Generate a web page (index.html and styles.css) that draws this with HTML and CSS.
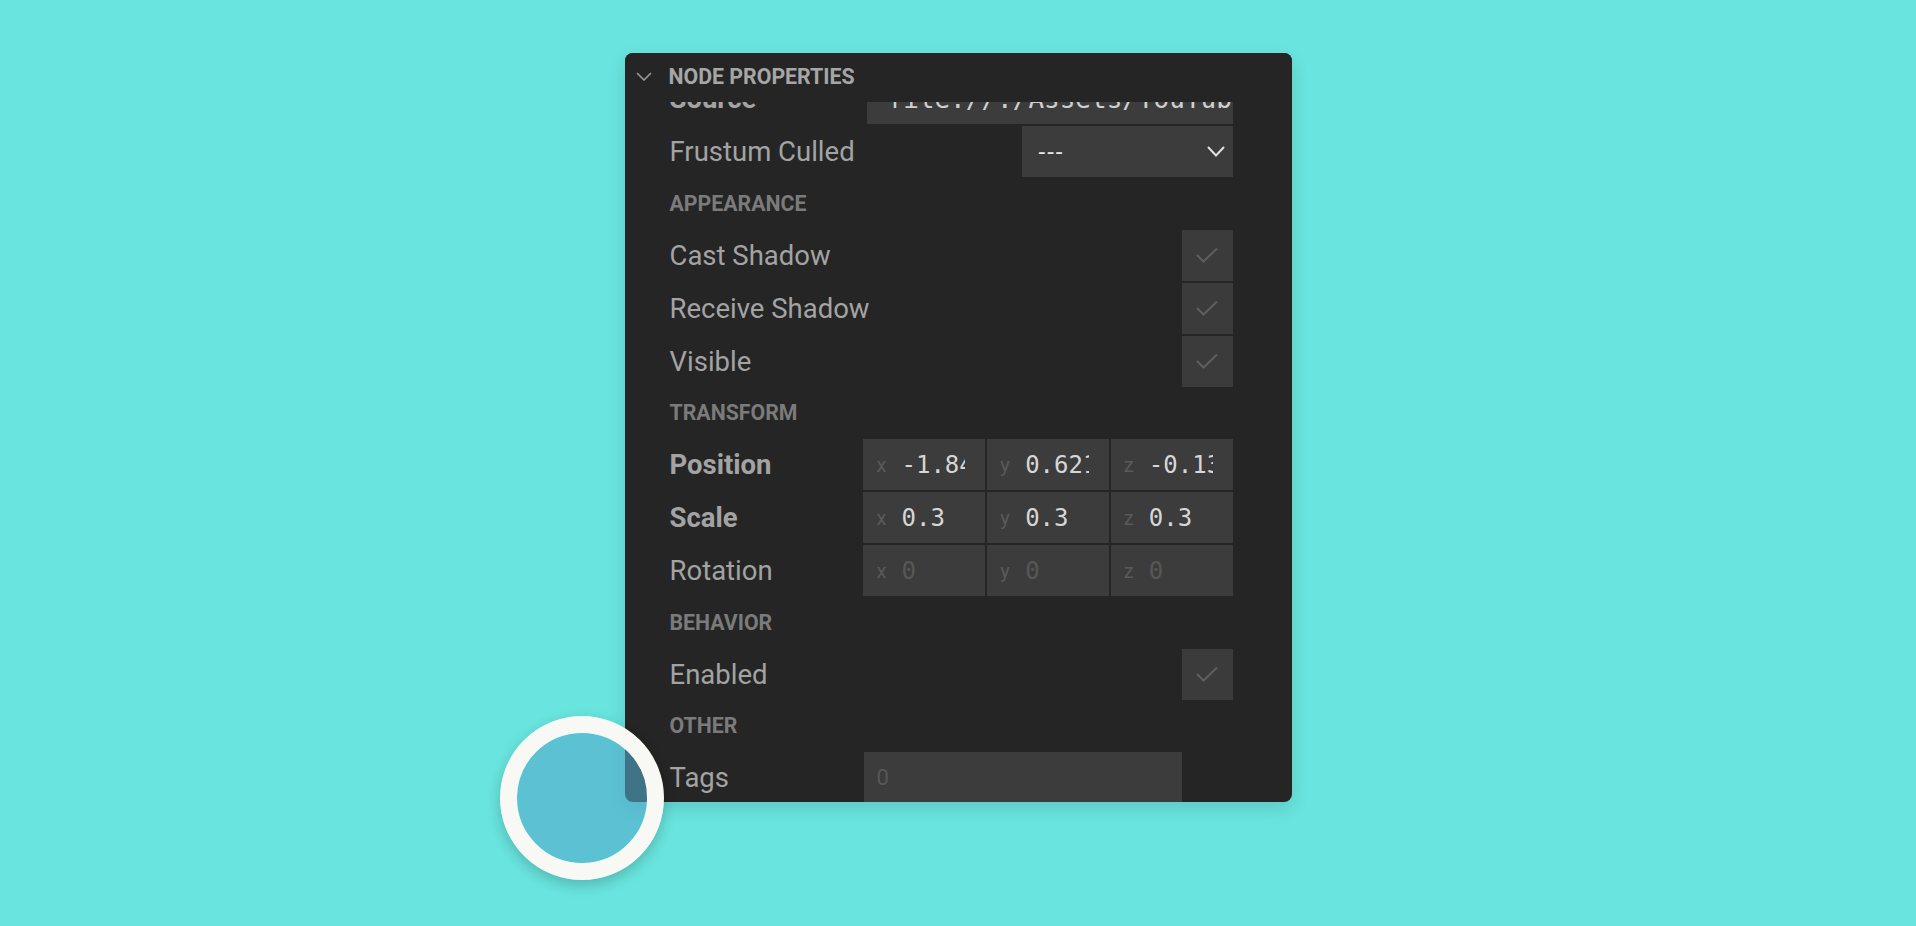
FILE: index.html
```html
<!DOCTYPE html>
<html lang="en">
<head>
    <meta charset="UTF-8">
    <meta name="viewport" content="width=device-width, initial-scale=1.0">
    <title>Node Properties</title>
    <link rel="stylesheet" href="styles.css">
</head>
<body>

    <div class="stage">
        <div class="panel">
            <div class="panel-header">
                <svg class="chevron" viewBox="0 0 16 9" width="16" height="9">
                    <path d="M1 1 L8 8 L15 1" />
                </svg>
                <span>Node Properties</span>
            </div>

            <div class="panel-body">
                <div class="prop-list">
                    <div class="row">
                        <div class="prop-label strong">Source</div>
                        <div class="control">
                            <div class="field source mono">file://./Assets/YouTube/clip_01.mp4</div>
                        </div>
                    </div>
                    <div class="row">
                        <div class="prop-label">Frustum Culled</div>
                        <div class="control">
                            <div class="field select">
                                <span>---</span>
                                <svg viewBox="0 0 18 11" width="18" height="11">
                                    <path d="M1 1 L9 9.5 L17 1" />
                                </svg>
                            </div>
                        </div>
                    </div>

                    <div class="section">Appearance</div>
                    <div class="row">
                        <div class="prop-label">Cast Shadow</div>
                        <div class="control">
                            <div class="checkbox"><svg viewBox="0 0 22 16" width="22" height="16"><path d="M1 8 L7.5 14.5 L21 1.5" /></svg></div>
                        </div>
                    </div>
                    <div class="row">
                        <div class="prop-label">Receive Shadow</div>
                        <div class="control">
                            <div class="checkbox"><svg viewBox="0 0 22 16" width="22" height="16"><path d="M1 8 L7.5 14.5 L21 1.5" /></svg></div>
                        </div>
                    </div>
                    <div class="row">
                        <div class="prop-label">Visible</div>
                        <div class="control">
                            <div class="checkbox"><svg viewBox="0 0 22 16" width="22" height="16"><path d="M1 8 L7.5 14.5 L21 1.5" /></svg></div>
                        </div>
                    </div>

                    <div class="section">Transform</div>
                    <div class="row">
                        <div class="prop-label strong">Position</div>
                        <div class="control vec">
                            <div class="field axis-field"><span class="axis">x</span><span class="val">-1.8432</span></div>
                            <div class="field axis-field"><span class="axis">y</span><span class="val">0.6213</span></div>
                            <div class="field axis-field"><span class="axis">z</span><span class="val">-0.1372</span></div>
                        </div>
                    </div>
                    <div class="row">
                        <div class="prop-label strong">Scale</div>
                        <div class="control vec">
                            <div class="field axis-field"><span class="axis">x</span><span class="val">0.3</span></div>
                            <div class="field axis-field"><span class="axis">y</span><span class="val">0.3</span></div>
                            <div class="field axis-field"><span class="axis">z</span><span class="val">0.3</span></div>
                        </div>
                    </div>
                    <div class="row">
                        <div class="prop-label">Rotation</div>
                        <div class="control vec">
                            <div class="field axis-field"><span class="axis">x</span><span class="val dim">0</span></div>
                            <div class="field axis-field"><span class="axis">y</span><span class="val dim">0</span></div>
                            <div class="field axis-field"><span class="axis">z</span><span class="val dim">0</span></div>
                        </div>
                    </div>

                    <div class="section">Behavior</div>
                    <div class="row">
                        <div class="prop-label">Enabled</div>
                        <div class="control">
                            <div class="checkbox"><svg viewBox="0 0 22 16" width="22" height="16"><path d="M1 8 L7.5 14.5 L21 1.5" /></svg></div>
                        </div>
                    </div>

                    <div class="section">Other</div>
                    <div class="row">
                        <div class="prop-label">Tags</div>
                        <div class="control start">
                            <div class="field tags">0</div>
                        </div>
                    </div>
                </div>
            </div>
        </div>

        <div class="touch-ring"></div>
    </div>

</body>
</html>
```

FILE: styles.css
```css
* {
    box-sizing: border-box;
}

body {
    margin: 0;
    padding: 0;
    background-color: #69e4de;
    font-family: Roboto, 'Noto Sans', sans-serif;
    overflow: hidden;
}

.stage {
    position: relative;
    height: 926px;
    padding-top: 53px;
}

.panel {
    width: 667px;
    height: 749px;
    margin: 0 auto;
    background-color: #252525;
    border-radius: 8px;
    box-shadow: 0 6px 18px rgba(0, 0, 0, 0.12);
    display: flex;
    flex-direction: column;
    overflow: hidden;
}

.panel-header {
    flex: 0 0 49px;
    display: flex;
    align-items: center;
    padding: 0 0 3px 11px;
    background-color: #252525;
    color: #a6a6a6;
    font-size: 21.3px;
    font-weight: 700;
    text-transform: uppercase;
    position: relative;
    z-index: 1;
}

.chevron {
    margin-right: 17px;
}

.chevron path {
    fill: none;
    stroke: #9a9a9a;
    stroke-width: 1.6;
}

.panel-body {
    flex: 1;
    overflow: hidden;
    padding: 0 59px 0 45px;
}

.prop-list {
    margin-top: -29px;
}

.row {
    display: flex;
    align-items: center;
    height: 51px;
    margin-bottom: 2px;
}

.section {
    display: flex;
    align-items: center;
    height: 48.5px;
    margin-bottom: 2px;
    color: #7b7b7b;
    font-size: 21.3px;
    font-weight: 700;
    text-transform: uppercase;
}

.prop-label {
    flex: 0 0 194px;
    font-size: 27.5px;
    color: #a3a3a3;
    white-space: nowrap;
}

.prop-label.strong {
    font-weight: 700;
}

.control {
    flex: 1;
    min-width: 0;
    height: 100%;
    display: flex;
    justify-content: flex-end;
}

.control.start {
    justify-content: flex-start;
}

.control.vec {
    gap: 2px;
}

.field {
    height: 100%;
    background-color: #3c3c3c;
    display: flex;
    align-items: center;
    overflow: hidden;
    white-space: nowrap;
}

.mono {
    font-family: 'DejaVu Sans Mono', 'Liberation Mono', monospace;
}

.source {
    width: 366px;
    padding: 0 16px 0 21px;
    font-size: 26px;
    color: #cfcfcf;
}

.select {
    width: 211px;
    padding: 0 8px 0 17px;
    justify-content: space-between;
    color: #e6e6e6;
    font-size: 24px;
    letter-spacing: 2px;
}

.select path {
    fill: none;
    stroke: #e0e0e0;
    stroke-width: 2;
}

.checkbox {
    width: 51px;
    height: 51px;
    background-color: #3b3b3b;
    display: flex;
    align-items: center;
    justify-content: center;
}

.checkbox path {
    fill: none;
    stroke: #5e5e5e;
    stroke-width: 2;
}

.axis-field {
    flex: 1 1 0;
    min-width: 0;
    padding: 0 20px 0 13px;
}

.axis {
    flex: 0 0 25px;
    font-size: 20px;
    color: #5a5a5a;
}

.val {
    flex: 1 1 0;
    min-width: 0;
    overflow: hidden;
    font-family: 'DejaVu Sans Mono', 'Liberation Mono', monospace;
    font-size: 24px;
    color: #d6d6d6;
}

.val.dim {
    color: #575757;
}

.tags {
    width: 318px;
    padding-left: 13px;
    font-size: 22px;
    color: #575757;
}

.touch-ring {
    position: absolute;
    left: 500px;
    top: 716px;
    width: 164px;
    height: 164px;
    border-radius: 50%;
    border: 17.5px solid #f8f9f5;
    background-color: rgba(82, 170, 203, 0.6);
    background-clip: padding-box;
    box-shadow: 0 5px 14px rgba(0, 0, 0, 0.2);
}
```
